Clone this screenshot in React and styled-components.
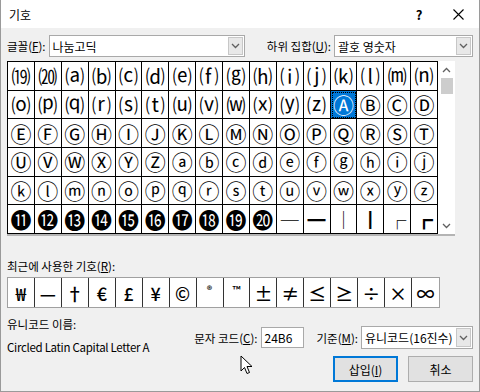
import React from "react";
import styled, { createGlobalStyle } from "styled-components";

const GlobalStyle = createGlobalStyle`
  html, body {
    margin: 0;
    padding: 0;
    background: #f0f0f0;
  }
  body {
    font-family: "Noto Sans CJK KR", "Noto Sans", sans-serif;
    font-size: 11.5px;
    color: #000;
  }
`;

const rows = [
  ["⒆", "⒇", "⒜", "⒝", "⒞", "⒟", "⒠", "⒡", "⒢", "⒣", "⒤", "⒥", "⒦", "⒧", "⒨", "⒩"],
  ["⒪", "⒫", "⒬", "⒭", "⒮", "⒯", "⒰", "⒱", "⒲", "⒳", "⒴", "⒵", "Ⓐ", "Ⓑ", "Ⓒ", "Ⓓ"],
  ["Ⓔ", "Ⓕ", "Ⓖ", "Ⓗ", "Ⓘ", "Ⓙ", "Ⓚ", "Ⓛ", "Ⓜ", "Ⓝ", "Ⓞ", "Ⓟ", "Ⓠ", "Ⓡ", "Ⓢ", "Ⓣ"],
  ["Ⓤ", "Ⓥ", "Ⓦ", "Ⓧ", "Ⓨ", "Ⓩ", "ⓐ", "ⓑ", "ⓒ", "ⓓ", "ⓔ", "ⓕ", "ⓖ", "ⓗ", "ⓘ", "ⓙ"],
  ["ⓚ", "ⓛ", "ⓜ", "ⓝ", "ⓞ", "ⓟ", "ⓠ", "ⓡ", "ⓢ", "ⓣ", "ⓤ", "ⓥ", "ⓦ", "ⓧ", "ⓨ", "ⓩ"],
  ["⓫", "⓬", "⓭", "⓮", "⓯", "⓰", "⓱", "⓲", "⓳", "⓴", "─", "━", "│", "┃", "┌", "┏"],
];

const recent = ["₩", "—", "†", "€", "£", "¥", "©", "®", "™", "±", "≠", "≤", "≥", "÷", "×", "∞"];

// which kind of glyph a cell holds decides its size
const kindOf = (ch) => {
  const code = ch.codePointAt(0);
  if (code >= 0x2500) return "line";
  if (code >= 0x24b6) return "circle";
  return "paren";
};

const Chevron = ({ up }) => (
  <svg width="9" height="6" viewBox="0 0 9 6">
    <path
      d={up ? "M1 5 L4.5 1.5 L8 5" : "M1 1 L4.5 4.5 L8 1"}
      fill="none"
      stroke="#606060"
      strokeWidth="1.3"
    />
  </svg>
);

const Cursor = () => (
  <svg width="14" height="20" viewBox="0 0 14 20">
    <path
      d="M1 1 L1 16 L4.5 12.5 L7 18.5 L9.5 17.5 L7 11.5 L12 11.5 Z"
      fill="#fff"
      stroke="#000"
      strokeWidth="1"
      strokeLinejoin="round"
    />
  </svg>
);

const App = () => {
  return (
    <Dialog>
      <GlobalStyle />
      <TitleBar>
        <Title>기호</Title>
        <HelpButton>?</HelpButton>
        <CloseButton>
          <svg width="11" height="11" viewBox="0 0 11 11">
            <path d="M0.5 0.5 L10.5 10.5 M10.5 0.5 L0.5 10.5" stroke="#000" strokeWidth="1.1" />
          </svg>
        </CloseButton>
      </TitleBar>

      <Body>
        <TopRow>
          <Field>
            <Label>
              글꼴(<u>F</u>):
            </Label>
            <Combo width={196}>
              <ComboText>나눔고딕</ComboText>
              <DropButton>
                <Chevron />
              </DropButton>
            </Combo>
          </Field>
          <Field>
            <Label>
              하위 집합(<u>U</u>):
            </Label>
            <Combo width={139}>
              <ComboText>괄호 영숫자</ComboText>
              <DropButton>
                <Chevron />
              </DropButton>
            </Combo>
          </Field>
        </TopRow>

        <SymbolFrame>
          <SymbolGrid>
            {rows.map((row, r) =>
              row.map((ch, c) => (
                <SymbolCell key={`${r}-${c}`} $selected={r === 1 && c === 12} $kind={kindOf(ch)}>
                  {ch}
                </SymbolCell>
              ))
            )}
          </SymbolGrid>
          <ScrollBar>
            <ScrollArrow>
              <Chevron up />
            </ScrollArrow>
            <ScrollThumb />
            <ScrollTrack />
            <ScrollArrow>
              <Chevron />
            </ScrollArrow>
          </ScrollBar>
        </SymbolFrame>

        <SectionLabel>
          최근에 사용한 기호(<u>R</u>):
        </SectionLabel>
        <RecentRow>
          {recent.map((ch, i) => (
            <RecentCell key={i} $small={ch === "®" || ch === "™"}>
              {ch}
            </RecentCell>
          ))}
        </RecentRow>

        <BottomArea>
          <NameColumn>
            <Label>유니코드 이름:</Label>
            <NameValue>Circled Latin Capital Letter A</NameValue>
          </NameColumn>
          <ControlColumn>
            <CodeRow>
              <Label>
                문자 코드(<u>C</u>):
              </Label>
              <CodeInput>24B6</CodeInput>
              <Label $gap={10}>
                기준(<u>M</u>):
              </Label>
              <Combo width={112} height={23}>
                <ComboText>유니코드(16진수)</ComboText>
                <DropButton>
                  <Chevron />
                </DropButton>
              </Combo>
            </CodeRow>
            <ButtonRow>
              <Button $primary>
                삽입(<u>I</u>)
              </Button>
              <Button>취소</Button>
            </ButtonRow>
          </ControlColumn>
        </BottomArea>
      </Body>

      <PointerSpot>
        <Cursor />
      </PointerSpot>
    </Dialog>
  );
};

const Dialog = styled.div`
  position: relative;
  width: 480px;
  height: 392px;
  box-sizing: border-box;
  border: 1px solid #9a9a9a;
  border-top: none;
  background: #f0f0f0;
  overflow: hidden;
  display: flex;
  flex-direction: column;
`;

const TitleBar = styled.div`
  height: 28px;
  flex: none;
  background: #fff;
  display: flex;
  align-items: center;
  padding-left: 8px;
`;

const Title = styled.div`
  font-size: 12px;
  flex: 1;
`;

const HelpButton = styled.div`
  width: 14px;
  font-size: 13px;
  font-weight: 600;
  margin-right: 27px;
  text-align: center;
`;

const CloseButton = styled.div`
  width: 11px;
  height: 11px;
  display: flex;
  margin-right: 15px;
`;

const Body = styled.div`
  flex: 1;
  padding: 7px 6px 0 6px;
  display: flex;
  flex-direction: column;
`;

const TopRow = styled.div`
  height: 22px;
  display: flex;
  justify-content: space-between;
  align-items: center;
`;

const Field = styled.div`
  display: flex;
  align-items: center;
  gap: 3px;
`;

const Label = styled.span`
  white-space: nowrap;
  font-size: 11.5px;
  line-height: 16px;
  margin-left: ${(p) => p.$gap || 0}px;
  u {
    text-underline-offset: 1px;
  }
`;

const Combo = styled.div`
  width: ${(p) => p.width}px;
  height: ${(p) => p.height || 22}px;
  box-sizing: border-box;
  border: 1px solid #a9a9a9;
  background: #fff;
  display: flex;
  align-items: stretch;
`;

const ComboText = styled.div`
  flex: 1;
  padding-left: 3px;
  font-size: 12px;
  display: flex;
  align-items: center;
  white-space: nowrap;
  overflow: hidden;
`;

const DropButton = styled.div`
  width: 15px;
  margin: 1px;
  box-sizing: border-box;
  border: 1px solid #c7c7c7;
  background: #e8e8e8;
  display: flex;
  align-items: center;
  justify-content: center;
`;

const SymbolFrame = styled.div`
  margin-top: 4px;
  width: 448px;
  display: flex;
  background: #fff;
  box-shadow: 0 2px 0 #b4b4b4;
`;

const SymbolGrid = styled.div`
  width: 431px;
  height: 173px;
  box-sizing: border-box;
  display: grid;
  grid-template-columns: repeat(16, 1fr);
  grid-template-rows: repeat(6, 1fr);
  border-left: 1px solid #000;
  border-top: 1px solid #000;
`;

const glyphSize = { paren: 19, circle: 21, line: 18 };

const SymbolCell = styled.div`
  border-right: 1px solid #000;
  border-bottom: 1px solid #000;
  display: flex;
  align-items: center;
  justify-content: center;
  font-family: "Noto Sans CJK KR", "DejaVu Sans", sans-serif;
  font-size: ${(p) => glyphSize[p.$kind]}px;
  line-height: 1;
  color: ${(p) => (p.$selected ? "#fff" : "#000")};
  background: ${(p) => (p.$selected ? "#0078d7" : "#fff")};
  outline: ${(p) => (p.$selected ? "1px dotted #000" : "none")};
  outline-offset: -2px;
`;

const ScrollBar = styled.div`
  width: 17px;
  display: flex;
  flex-direction: column;
  align-items: center;
`;

const ScrollArrow = styled.div`
  height: 17px;
  display: flex;
  align-items: center;
  justify-content: center;
`;

const ScrollThumb = styled.div`
  width: 12px;
  height: 16px;
  background: #cdcdcd;
`;

const ScrollTrack = styled.div`
  flex: 1;
`;

const SectionLabel = styled.div`
  margin-top: 24px;
  line-height: 16px;
  font-size: 11.5px;
`;

const RecentRow = styled.div`
  margin-top: 3px;
  width: 433px;
  height: 31px;
  box-sizing: border-box;
  display: grid;
  grid-template-columns: repeat(16, 1fr);
  border: 1px solid #a0a0a0;
  background: #fff;
`;

const RecentCell = styled.div`
  border-right: 1px solid #333;
  display: flex;
  align-items: center;
  justify-content: center;
  font-family: "Noto Sans CJK KR", "DejaVu Sans", sans-serif;
  font-size: ${(p) => (p.$small ? 11 : 18)}px;
  font-weight: 500;
  padding-bottom: ${(p) => (p.$small ? 7 : 0)}px;
  &:last-child {
    border-right: none;
  }
`;

const BottomArea = styled.div`
  margin-top: 8px;
  display: flex;
`;

const NameColumn = styled.div`
  display: flex;
  flex-direction: column;
  gap: 7px;
`;

const NameValue = styled.div`
  font-size: 11.5px;
  letter-spacing: -0.3px;
  line-height: 16px;
`;

const ControlColumn = styled.div`
  margin-left: auto;
  padding-top: 10px;
  display: flex;
  flex-direction: column;
  align-items: flex-end;
  gap: 7px;
`;

const CodeRow = styled.div`
  display: flex;
  align-items: center;
  gap: 3px;
`;

const CodeInput = styled.div`
  width: 43px;
  height: 21px;
  box-sizing: border-box;
  border: 1px solid #a9a9a9;
  background: #fff;
  padding-left: 3px;
  display: flex;
  align-items: center;
  font-size: 12px;
`;

const ButtonRow = styled.div`
  display: flex;
  gap: 10px;
`;

const Button = styled.div`
  width: 65px;
  height: 26px;
  box-sizing: border-box;
  border: ${(p) => (p.$primary ? "2px solid #0078d7" : "1px solid #adadad")};
  background: #e1e1e1;
  display: flex;
  align-items: center;
  justify-content: center;
  font-size: 12px;
`;

const PointerSpot = styled.div`
  position: absolute;
  left: 239px;
  top: 355px;
  line-height: 0;
`;

export default App;
